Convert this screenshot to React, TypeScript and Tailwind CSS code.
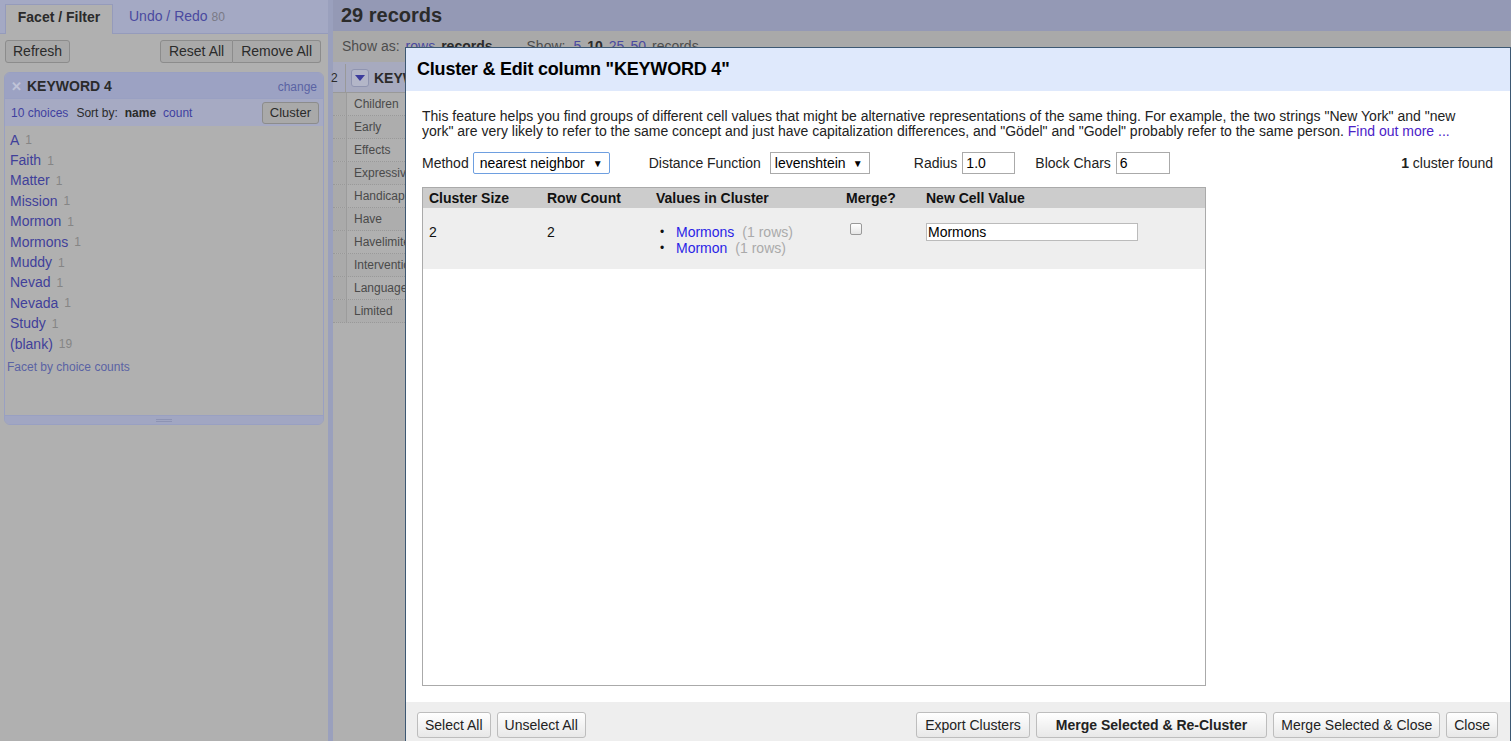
import React from "react";

const choices: [string, number][] = [
  ["A", 1],
  ["Faith", 1],
  ["Matter", 1],
  ["Mission", 1],
  ["Mormon", 1],
  ["Mormons", 1],
  ["Muddy", 1],
  ["Nevad", 1],
  ["Nevada", 1],
  ["Study", 1],
  ["(blank)", 19],
];

const rows = [
  "Children",
  "Early",
  "Effects",
  "Expressive",
  "Handicapped",
  "Have",
  "Havelimited",
  "Intervention",
  "Language",
  "Limited",
];

function DimButton({ children, className = "" }: { children: React.ReactNode; className?: string }) {
  return (
    <div
      className={`h-[23px] px-[7px] flex items-center border border-[#8c8c8c] bg-[#a9a9a9] text-[#2b2b2b] text-[14px] rounded-[3px] ${className}`}
    >
      {children}
    </div>
  );
}

function Button({ children, className = "" }: { children: React.ReactNode; className?: string }) {
  return (
    <button
      className={`h-[26px] px-[7px] border border-[#bdbdbd] rounded-[3px] bg-gradient-to-b from-white to-[#e8e8e8] text-[14px] text-[#222] ${className}`}
    >
      {children}
    </button>
  );
}

function LeftPanel() {
  return (
    <div className="w-[328px] h-full flex flex-col bg-[#b0b0b0]">
      <div className="h-[34px] bg-[#a4a9c4] flex items-end pl-[5px] border-b border-[#959bbb]">
        <div className="h-[30px] w-[108px] bg-[#b0b0b0] border border-b-0 border-[#959bbb] flex items-center justify-center pb-[4px] font-bold text-[14px] text-[#2a2a2a] -mb-px">
          Facet / Filter
        </div>
        <div className="h-[30px] flex items-center pb-[3px] pl-[16px] text-[14px] text-[#4a4aa0]">
          Undo / Redo <span className="ml-[4px] text-[12px] text-[#7a7a86]">80</span>
        </div>
      </div>
      <div className="flex items-center justify-between px-[5px] pt-[6px]">
        <DimButton>Refresh</DimButton>
        <div className="flex mr-[2px]">
          <DimButton className="rounded-r-none px-[8px]">Reset All</DimButton>
          <DimButton className="rounded-l-none border-l-0 px-[8px]">Remove All</DimButton>
        </div>
      </div>
      <div className="mx-[4px] mt-[9px] h-[353px] border border-[#99a0c2] rounded-[6px] flex flex-col overflow-hidden">
        <div className="h-[25px] bg-[#9ca2c3] flex items-center pt-[2px] px-[6px]">
          <span className="text-[#c0c4d8] text-[13px] font-bold leading-none">✕</span>
          <span className="ml-[5px] font-bold text-[14px] text-[#2a2a2a]">KEYWORD 4</span>
          <span className="ml-auto text-[12px] text-[#5a63a4]">change</span>
        </div>
        <div className="h-[28px] bg-[#a6aac3] flex items-center pl-[6px] pr-[4px] text-[12px] border-t border-[#99a0c2]">
          <span className="text-[#4040a0]">10 choices</span>
          <span className="ml-[8px] text-[#2a2a2a]">Sort by:</span>
          <span className="ml-[7px] font-bold text-[#2a2a2a]">name</span>
          <span className="ml-[7px] text-[#4040a0]">count</span>
          <div className="ml-auto h-[22px] px-[7px] flex items-center border border-[#8c8c8c] bg-[#a9a9a9] text-[#2b2b2b] text-[13px] rounded-[3px]">
            Cluster
          </div>
        </div>
        <div className="flex-1 pt-[4px] pl-[5px] bg-[#b0b0b0]">
          {choices.map(([name, count]) => (
            <div key={name} className="h-[20.4px] flex items-center text-[14px]">
              <span className="text-[#40409a]">{name}</span>
              <span className="ml-[6px] text-[12px] text-[#858585]">{count}</span>
            </div>
          ))}
          <div className="mt-[4px] -ml-[3px] text-[12px] text-[#5a63a4]">Facet by choice counts</div>
        </div>
        <div className="h-[9px] bg-[#a1a6c2] border-t border-[#99a0c2] flex items-center justify-center">
          <div className="w-[16px] h-[3px] border-y border-[#8d93b3]" />
        </div>
      </div>
    </div>
  );
}

function MainArea() {
  return (
    <div className="flex-1 h-full flex flex-col bg-[#b0b0b0]">
      <div className="h-[31px] bg-[#9499b5] flex items-center pl-[8px] pb-[2px]">
        <span className="text-[20px] font-bold text-[#2b2b2b]">29 records</span>
      </div>
      <div className="h-[31px] bg-[#a9a9a9] flex items-center pl-[9px] text-[14px] text-[#4d4d4d]">
        Show as: <span className="ml-[6px] text-[#4a4aa0]">rows</span>
        <span className="ml-[6px] font-bold text-[#2b2b2b]">records</span>
        <span className="ml-[34px]">Show:</span>
        <span className="ml-[8px] text-[#4a4aa0]">5</span>
        <span className="ml-[6px] font-bold text-[#2b2b2b]">10</span>
        <span className="ml-[6px] text-[#4a4aa0]">25</span>
        <span className="ml-[6px] text-[#4a4aa0]">50</span>
        <span className="ml-[6px]">records</span>
      </div>
      <div className="h-[31px] bg-[#a7aabf] flex items-center pt-[2px] border-b border-[#999]">
        <div className="w-[15px] h-full flex items-center text-[12px] text-[#2b2b2b] border-r border-[#999] -ml-[2px]">2</div>
        <div className="ml-[5px] w-[18px] h-[18px] border border-[#8f94b0] rounded-[3px] bg-[#b3b6c8] flex items-center justify-center">
          <svg width="10" height="6" viewBox="0 0 10 6">
            <path d="M0 0 L10 0 L5 6 Z" fill="#3c3c9c" />
          </svg>
        </div>
        <span className="ml-[5px] text-[14px] font-bold text-[#2b2b2b]">KEYWORD 4</span>
      </div>
      <div className="flex flex-col">
        {rows.map((r, i) => (
          <div
            key={r}
            className={`h-[23px] flex border-b border-dotted border-[#999] ${i % 2 ? "bg-[#adadad]" : "bg-[#b0b0b0]"}`}
          >
            <div className="w-[14px] h-full border-r border-[#9c9c9c] bg-[#aaaaaa]" />
            <div className="pl-[7px] flex items-center text-[12px] text-[#4a4a4a]">{r}</div>
          </div>
        ))}
      </div>
    </div>
  );
}

function Dialog() {
  return (
    <div className="absolute left-[405px] top-[47px] w-[1106px] h-[700px] border border-[#3d5873] bg-white flex flex-col">
      <div className="h-[43px] bg-[#dfe9fc] flex items-center pl-[11px] shrink-0">
        <span className="text-[18px] font-bold text-black tracking-[-0.2px]">Cluster &amp; Edit column "KEYWORD 4"</span>
      </div>
      <div className="h-[611px] px-[16px] pt-[18px] shrink-0 flex flex-col">
        <p className="text-[14px] leading-[15px] text-[#222] pr-[14px]">
          This feature helps you find groups of different cell values that might be alternative representations of the
          same thing. For example, the two strings "New York" and "new york" are very likely to refer to the same
          concept and just have capitalization differences, and "Gödel" and "Godel" probably refer to the same person.{" "}
          <span className="text-[#4b22c8]">Find out more ...</span>
        </p>
        <div className="mt-[13px] h-[22px] flex items-center text-[14px] text-[#222]">
          <span>Method</span>
          <div className="ml-[4px] w-[137px] h-[22px] border border-[#6e9fe0] rounded-[2px] flex items-center pl-[6px] pr-[6px] text-black">
            nearest neighbor <span className="ml-auto text-[10px]">▼</span>
          </div>
          <span className="ml-[39px]">Distance Function</span>
          <div className="ml-[9px] w-[100px] h-[22px] border border-[#aaa] flex items-center pl-[4px] pr-[6px] text-black">
            levenshtein <span className="ml-auto text-[10px]">▼</span>
          </div>
          <span className="ml-[44px]">Radius</span>
          <div className="ml-[5px] w-[53px] h-[22px] border border-[#aaa] flex items-center pl-[3px] text-black">1.0</div>
          <span className="ml-[20px]">Block Chars</span>
          <div className="ml-[5px] w-[54px] h-[22px] border border-[#aaa] flex items-center pl-[3px] text-black">6</div>
          <span className="ml-auto mr-[1px]">
            <b>1</b> cluster found
          </span>
        </div>
        <div className="mt-[13px] w-[784px] h-[499px] border border-[#aaa] text-[14px] text-[#111]">
          <div className="h-[20px] bg-[#cccccc] flex items-center font-bold">
            <div className="w-[118px] pl-[6px]">Cluster Size</div>
            <div className="w-[109px] pl-[6px]">Row Count</div>
            <div className="w-[190px] pl-[6px]">Values in Cluster</div>
            <div className="w-[80px] pl-[6px]">Merge?</div>
            <div className="pl-[6px]">New Cell Value</div>
          </div>
          <div className="h-[61px] bg-[#eeeeee] flex items-start pt-[16px]">
            <div className="w-[118px] pl-[6px] leading-[16px]">2</div>
            <div className="w-[109px] pl-[6px] leading-[16px]">2</div>
            <div className="w-[190px] pl-[10px] leading-[16px]">
              {["Mormons", "Mormon"].map((v) => (
                <div key={v} className="flex">
                  <span className="w-[16px] text-[12px]">•</span>
                  <span className="text-[#2a1ee6]">{v}</span>
                  <span className="ml-[8px] text-[#aaa]">(1 rows)</span>
                </div>
              ))}
            </div>
            <div className="w-[80px] pl-[10px] -mt-[1px]">
              <div className="w-[12px] h-[12px] border border-[#999] rounded-[2px] bg-gradient-to-b from-white to-[#e5e5e5]" />
            </div>
            <div className="pl-[6px] -mt-[1px]">
              <div className="w-[212px] h-[18px] border border-[#bbb] bg-white flex items-center pl-[1px] text-black">
                Mormons
              </div>
            </div>
          </div>
        </div>
      </div>
      <div className="flex-1 bg-[#eeeeee] flex items-start pt-[10px] pl-[11px] pr-[12px]">
        <div className="flex gap-[6px]">
          <Button>Select All</Button>
          <Button>Unselect All</Button>
        </div>
        <div className="ml-auto flex gap-[6px]">
          <Button className="px-[8px]">Export Clusters</Button>
          <Button className="font-bold px-[19px]">Merge Selected &amp; Re-Cluster</Button>
          <Button>Merge Selected &amp; Close</Button>
          <Button>Close</Button>
        </div>
      </div>
    </div>
  );
}

export default function App() {
  return (
    <div className="relative w-[1511px] h-[741px] overflow-hidden flex font-['Liberation_Sans',Arial,sans-serif] bg-[#b0b0b0]">
      <LeftPanel />
      <div className="w-[5px] h-full bg-[#9aa0bd]" />
      <MainArea />
      <Dialog />
    </div>
  );
}
